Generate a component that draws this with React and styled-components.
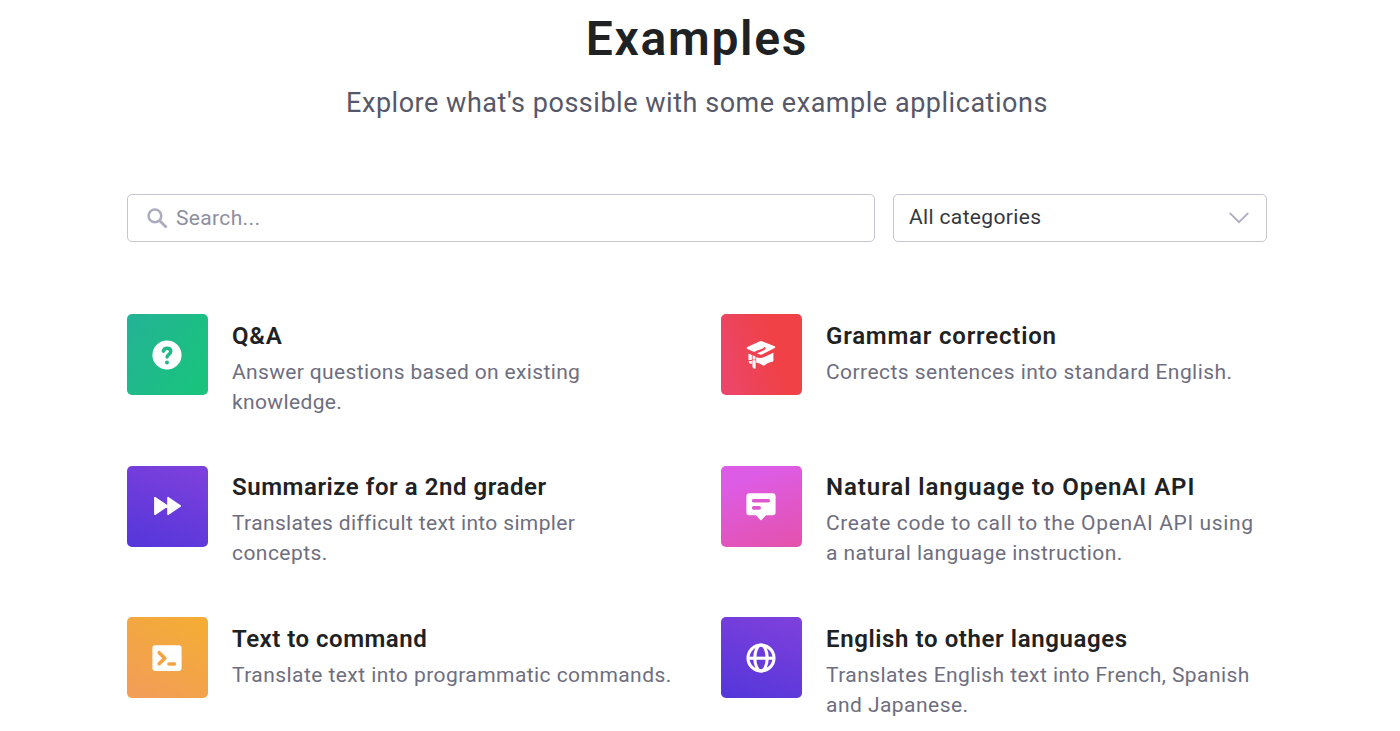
import React from "react";
import styled, { createGlobalStyle } from "styled-components";

const GlobalStyle = createGlobalStyle`
  *, *::before, *::after { box-sizing: border-box; }
  html, body { margin: 0; background: #fff; }
  body {
    font-family: Roboto, "Liberation Sans", sans-serif;
    color: #202123;
  }
`;

const Page = styled.main`
  width: 1140px;
  height: 731px;
  margin-left: 127px;
  padding-top: 11px;
`;

const Title = styled.h1`
  margin: 0;
  height: 56px;
  font-size: 48px;
  line-height: 56px;
  font-weight: 600;
  text-align: center;
  letter-spacing: 1.7px;
`;

const Subtitle = styled.p`
  margin: 16px 0 0;
  height: 40px;
  font-size: 27px;
  line-height: 40px;
  text-align: center;
  color: #565869;
  letter-spacing: 0.53px;
`;

const Filters = styled.div`
  display: grid;
  grid-template-columns: 748px 374px;
  column-gap: 18px;
  margin-top: 71px;
`;

const Field = styled.div`
  display: flex;
  align-items: center;
  height: 48px;
  border: 1px solid #c5c5d2;
  border-radius: 5px;
`;

const SearchField = styled(Field)`
  padding-left: 19px;
  gap: 8px;

  svg { flex: none; }
`;

const SearchInput = styled.input`
  flex: 1;
  min-width: 0;
  height: 44px;
  padding: 0;
  border: 0;
  outline: 0;
  background: transparent;
  font: 400 21px Roboto, "Liberation Sans", sans-serif;
  letter-spacing: 0.35px;

  &::placeholder { color: #8e8ea0; opacity: 1; }
`;

const SelectField = styled(Field)`
  justify-content: space-between;
  padding: 0 17px 2px 15px;
  font-size: 21px;
  letter-spacing: 0.35px;
  color: #353740;

  svg { position: relative; top: 1px; }
`;

const Grid = styled.section`
  display: grid;
  grid-template-columns: 594px 546px;
  grid-template-rows: 151.5px 151.5px 110px;
  margin-top: 72px;
`;

const Card = styled.article`
  display: flex;
  align-items: flex-start;
  gap: 24px;
`;

const Tile = styled.div`
  display: flex;
  align-items: center;
  justify-content: center;
  flex: none;
  width: 81px;
  height: 81px;
  padding-right: 1px;
  border-radius: 5px;
  background: ${(p) => p.$fill};
`;

const CardText = styled.div`
  padding-top: 3.6px;
  white-space: nowrap;
`;

const CardTitle = styled.h2`
  margin: 0 0 3px;
  font-size: 24px;
  line-height: 36px;
  font-weight: 600;
  letter-spacing: ${(p) => p.$spacing}px;
`;

const CardLine = styled.span`
  display: block;
  font-size: 21px;
  line-height: 30px;
  color: #6e6e80;
  letter-spacing: ${(p) => p.$spacing}px;
`;

const QuestionIcon = () => (
  <svg width="30" height="30" viewBox="0 0 30 30" fill="none">
    <circle cx="15" cy="15" r="14.6" fill="#fff" />
    <path d="M11.3 11.2c.5-1.800 1.900-2.900 3.800-2.900 2.200 0 3.700 1.300 3.700 3.300 0 2.800-3.700 2.700-3.700 5.400" stroke="#1fb985" strokeWidth="3.400" strokeLinecap="round" />
    <circle cx="15" cy="22.400" r="2" fill="#1fb985" />
  </svg>
);

const GraduationIcon = () => (
  <svg width="30" height="30" viewBox="0 0 30 30" fill="#fff">
    <path d="M14 1.200a2.200 2.200 0 0 1 1.700 0l12.900 5c1 .4 1 1.300.1 1.800L16.500 14.300a3.500 3.500 0 0 1-3.200 0L1.400 9c-1-.5-1-1.500 0-2Z" />
    <path d="M18.600 8.200c-1.400 2.300-6 2.500-9.400 4.600" fill="none" stroke="#ee4355" strokeWidth="2.200" strokeLinecap="round" />
    <path d="M10.200 17.300c3.100 1.200 5.900.9 8.700-.5l8.500-4.100v7.500c0 1-.5 1.600-1.400 1.800-2.700.3-4.900 1.400-6.900 2.900-1 .7-1.900.7-2.900 0-1.700-1.100-3.400-1.900-6-2.200Z" />
    <path d="M2.500 13.400l3.300 1.500v5H2.500ZM6.400 20.300h3.200v8.400c-1.900.3-3.200-.8-3.200-2.600ZM6.600 15.300l2.900 1.200v3H6.600ZM2.700 21h3.100v3c-1.900 0-3.100-1.100-3.100-3Z" />
  </svg>
);

const ForwardIcon = () => (
  <svg width="30" height="30" viewBox="0 0 30 30" fill="#fff" stroke="#fff" strokeWidth="1.6" strokeLinejoin="round">
    <path d="M2.900 6.700v16.600L15.200 15ZM16 6.700v16.600L28.200 15Z" />
  </svg>
);

const MessageIcon = () => (
  <svg width="30" height="30" viewBox="0 0 30 30" fill="none">
    <path d="M3.200 2.300h23.600c1.700 0 2.800 1.100 2.800 2.800v16.400c0 1.700-1.100 2.800-2.800 2.800H20l-4.500 4.600c-.4.400-.7.400-1.100 0L10 24.300H3.200C1.500 24.300.4 23.200.4 21.500V5.100C.4 3.400 1.500 2.300 3.200 2.300Z" fill="#fff" />
    <path d="M7.700 9.700h14.600M7.700 16.900h5.500" stroke="#df58cf" strokeWidth="3.600" strokeLinecap="round" />
  </svg>
);

const TerminalIcon = () => (
  <svg width="30" height="30" viewBox="0 0 30 30" fill="none">
    <rect x=".4" y="2.300" width="29.200" height="25.600" rx="2.800" fill="#fff" />
    <path d="M7.200 9.700l5.600 5.500-5.600 5.600M17 21h5.500" stroke="#f2a446" strokeWidth="3.600" strokeLinecap="round" strokeLinejoin="round" />
  </svg>
);

const GlobeIcon = () => (
  <svg width="30" height="30" viewBox="0 0 30 30" fill="none" stroke="#fff" strokeWidth="3.100">
    <circle cx="15" cy="15" r="13" />
    <ellipse cx="15" cy="15" rx="6.200" ry="13" />
    <path d="M2 15.200h26" />
  </svg>
);

const SearchIcon = () => (
  <svg width="21" height="21" viewBox="0 0 21 21" fill="none" stroke="#acacbe" strokeWidth="2.500">
    <circle cx="7.900" cy="7.900" r="6.300" />
    <path d="M12.500 12.500l7 7" strokeWidth="2.800" />
  </svg>
);

const ChevronIcon = () => (
  <svg width="20" height="12" viewBox="0 0 20 12" fill="none" stroke="#acacbe" strokeWidth="1.700" strokeLinecap="round">
    <path d="M1.200 1.300L10 10.200l8.800-8.900" />
  </svg>
);

const purple = "linear-gradient(20deg, #5436da 0%, #7d40dc 95%)";

// Each text is paired with its letter spacing in pixels.
const examples = [
  {
    title: ["Q&A", 0.8],
    lines: [["Answer questions based on existing", 0.35], ["knowledge.", 0.37]],
    fill: "linear-gradient(120deg, #24b296 0%, #19c37d 90%)",
    Icon: QuestionIcon,
  },
  {
    title: ["Grammar correction", 0.79],
    lines: [["Corrects sentences into standard English.", 0.45]],
    fill: "linear-gradient(75deg, #ec466e 0%, #ef4146 65%)",
    Icon: GraduationIcon,
  },
  {
    title: ["Summarize for a 2nd grader", 0.55],
    lines: [["Translates difficult text into simpler", 0.35], ["concepts.", 0.45]],
    fill: purple,
    Icon: ForwardIcon,
  },
  {
    title: ["Natural language to OpenAI API", 0.96],
    lines: [["Create code to call to the OpenAI API using", 0.64], ["a natural language instruction.", 0.45]],
    fill: "linear-gradient(160deg, #dd5ce5 20%, #e452ae 95%)",
    Icon: MessageIcon,
  },
  {
    title: ["Text to command", 0.5],
    lines: [["Translate text into programmatic commands.", 0.44]],
    fill: "linear-gradient(30deg, #f29e56 10%, #f4ac36 90%)",
    Icon: TerminalIcon,
  },
  {
    title: ["English to other languages", 0.6],
    lines: [["Translates English text into French, Spanish", 0.43], ["and Japanese.", 0.46]],
    fill: purple,
    Icon: GlobeIcon,
  },
];

export default function App() {
  return (
    <>
      <GlobalStyle />
      <Page>
        <Title>Examples</Title>
        <Subtitle>Explore what's possible with some example applications</Subtitle>
        <Filters>
          <SearchField>
            <SearchIcon />
            <SearchInput placeholder="Search..." aria-label="Search" />
          </SearchField>
          <SelectField>
            All categories
            <ChevronIcon />
          </SelectField>
        </Filters>
        <Grid>
          {examples.map(({ title, lines, fill, Icon }) => (
            <Card key={title[0]}>
              <Tile $fill={fill}><Icon /></Tile>
              <CardText>
                <CardTitle $spacing={title[1]}>{title[0]}</CardTitle>
                {lines.map(([text, spacing]) => (
                  <CardLine key={text} $spacing={spacing}>{text}</CardLine>
                ))}
              </CardText>
            </Card>
          ))}
        </Grid>
      </Page>
    </>
  );
}
